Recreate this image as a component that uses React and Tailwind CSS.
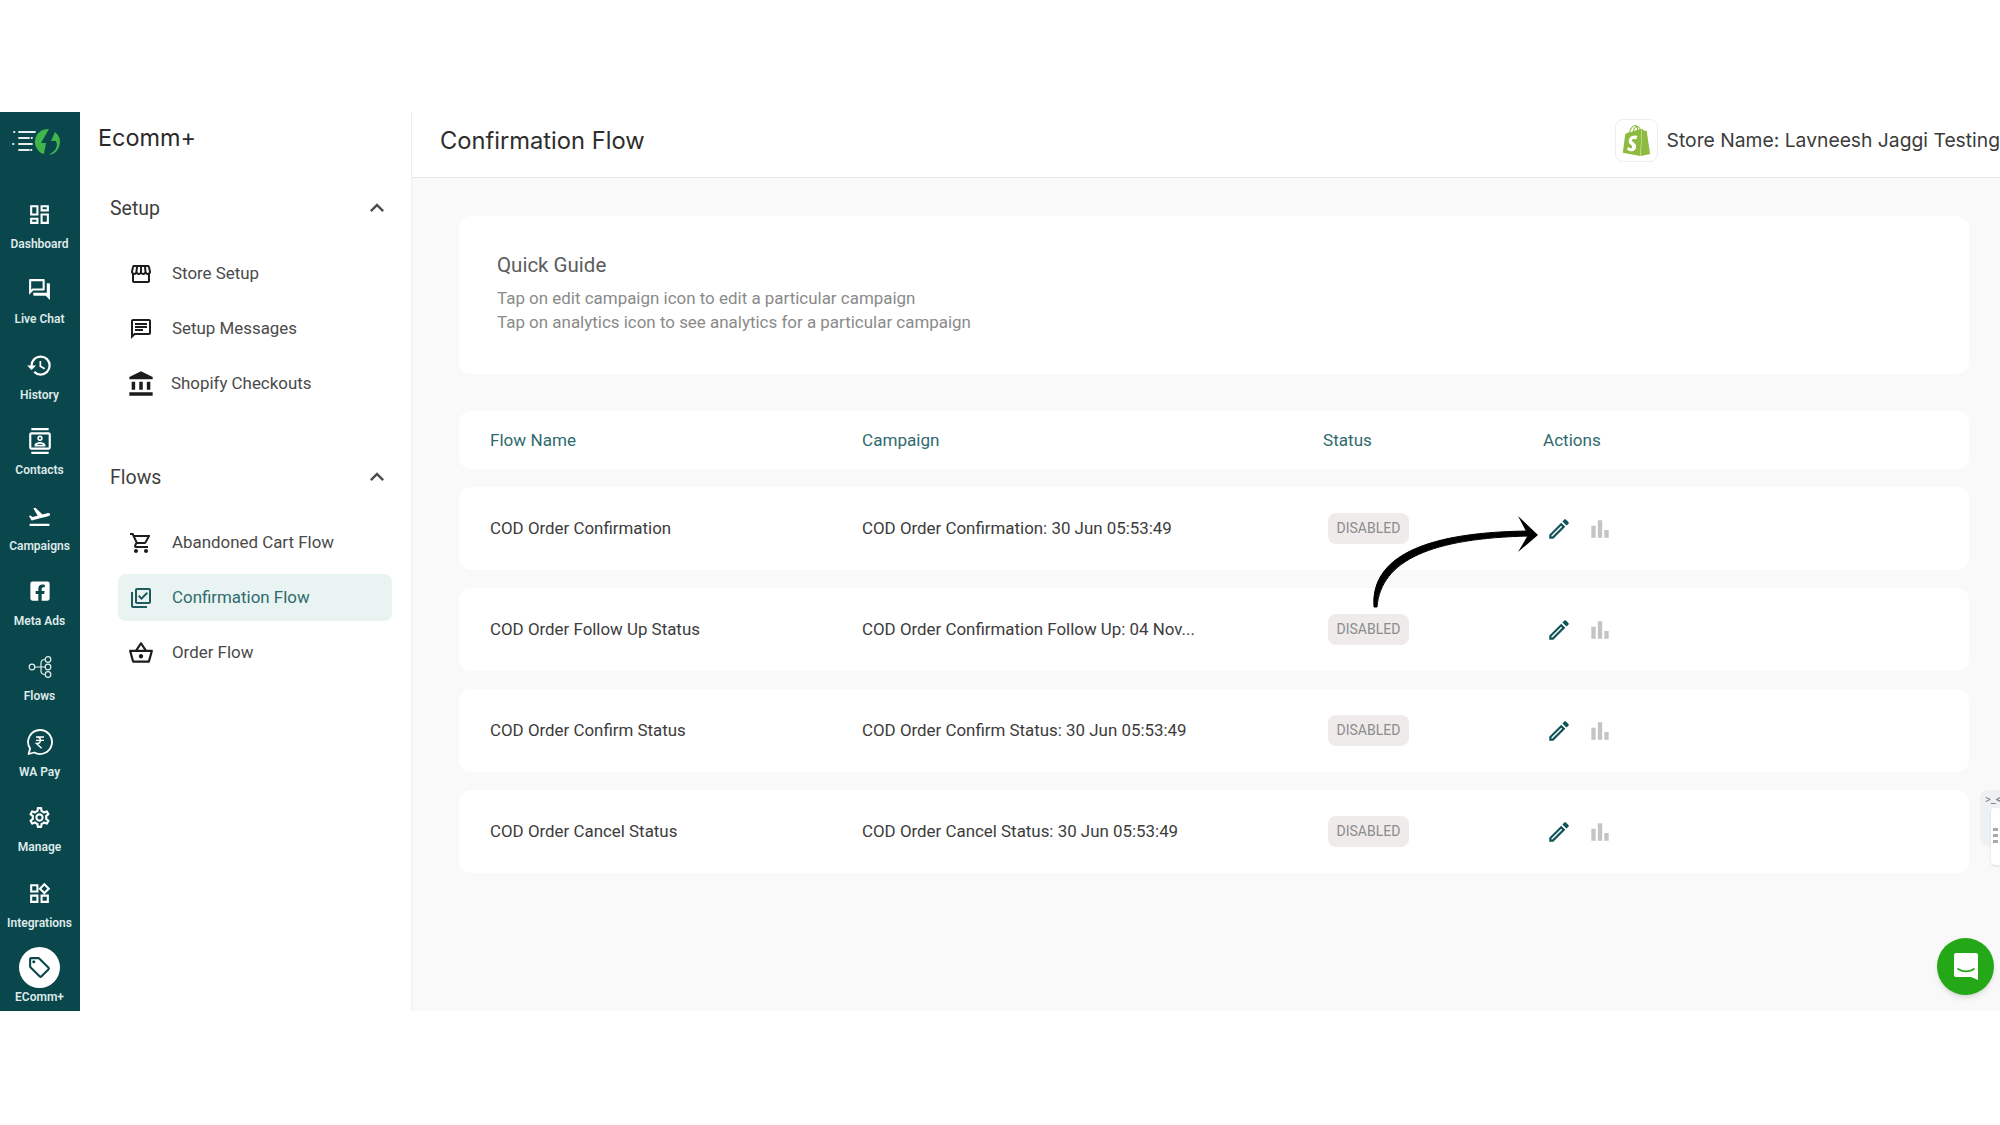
import React from 'react';
import {
  MdOutlineDashboard, MdOutlineQuestionAnswer, MdHistory, MdOutlineContacts, MdFlightTakeoff,
  MdOutlineSettings, MdOutlineWidgets, MdOutlineLocalOffer, MdOutlineStorefront, MdOutlineChat,
  MdAccountBalance, MdOutlineShoppingCart, MdOutlineLibraryAddCheck, MdOutlineShoppingBasket,
  MdKeyboardArrowUp, MdOutlineEdit, MdBarChart,
} from 'react-icons/md';
import { FaFacebookSquare } from 'react-icons/fa';
import { SiShopify } from 'react-icons/si';

function FlowsIcon() {
  return (
    <svg width="26" height="26" viewBox="0 0 26 26" fill="none" stroke="#e4eeee" strokeWidth="1.2">
      <circle cx="5" cy="13" r="2.8" />
      <circle cx="21" cy="5.5" r="2.800" />
      <circle cx="21" cy="13" r="2.800" />
      <circle cx="21" cy="20.5" r="2.800" />
      <path d="M7.800 13h10.400M18.200 5.500c-3.500 0-4.200 2-4.200 3.500v8c0 1.500.7 3.500 4.200 3.500" />
    </svg>
  );
}

function PayIcon() {
  return (
    <svg width="28" height="28" viewBox="0 0 28 28" fill="none" stroke="white" strokeWidth="1.8">
      <path d="M14 2a12 12 0 1 1-5.800 22.500L2.600 26l1.500-5.400A12 12 0 0 1 14 2z" strokeLinejoin="round" />
      <path d="M10 9h8M10 12.400h8M11 9c4.500 0 4.500 6.400 0 6.400h-.6l5.200 4.800" strokeWidth="1.400" />
    </svg>
  );
}

function Logo() {
  return (
    <svg width="52" height="28" viewBox="0 0 52 28" fill="none">
      <g stroke="#e6efef" strokeWidth="1.800" strokeLinecap="round">
        <path d="M3 4h.5M8 4h16M8 10h10M20.500 10h.5M2 16h.5M8 16h13M8 22h10M20 22h.5" />
      </g>
      <path d="M38 1A13 13 0 0 0 30 25L33 26L35 15L30 15Z" fill="#3fb54a" />
      <path d="M44 4A13 13 0 0 1 38 27L43 23A9 9 0 0 0 45 13L40 13Z" fill="#3fb54a" />
    </svg>
  );
}

const railItems = [
  { label: 'Dashboard', icon: <MdOutlineDashboard size={25} /> },
  { label: 'Live Chat', icon: <MdOutlineQuestionAnswer size={25} /> },
  { label: 'History', icon: <MdHistory size={27} /> },
  { label: 'Contacts', icon: <MdOutlineContacts size={26} /> },
  { label: 'Campaigns', icon: <MdFlightTakeoff size={25} /> },
  { label: 'Meta Ads', icon: <FaFacebookSquare size={22} /> },
  { label: 'Flows', icon: <FlowsIcon /> },
  { label: 'WA Pay', icon: <PayIcon /> },
  { label: 'Manage', icon: <MdOutlineSettings size={25} /> },
  { label: 'Integrations', icon: <MdOutlineWidgets size={25} /> },
];

const setupItems = [
  { label: 'Store Setup', icon: <MdOutlineStorefront size={24} /> },
  { label: 'Setup Messages', icon: <MdOutlineChat size={24} /> },
  { label: 'Shopify Checkouts', icon: <MdAccountBalance size={28} />, tight: true },
];

const flowItems = [
  { label: 'Abandoned Cart Flow', icon: <MdOutlineShoppingCart size={24} /> },
  { label: 'Confirmation Flow', icon: <MdOutlineLibraryAddCheck size={24} />, active: true },
  { label: 'Order Flow', icon: <MdOutlineShoppingBasket size={26} /> },
];

const rows = [
  { name: 'COD Order Confirmation', campaign: 'COD Order Confirmation: 30 Jun 05:53:49' },
  { name: 'COD Order Follow Up Status', campaign: 'COD Order Confirmation Follow Up: 04 Nov...' },
  { name: 'COD Order Confirm Status', campaign: 'COD Order Confirm Status: 30 Jun 05:53:49' },
  { name: 'COD Order Cancel Status', campaign: 'COD Order Cancel Status: 30 Jun 05:53:49' },
];

function Rail() {
  return (
    <aside className="w-[80px] shrink-0 bg-[#0a474c] pr-[1px] flex flex-col items-center text-white font-['Roboto',sans-serif]">
      <div className="h-[78px] pt-[16px] pl-[11px] w-full">
        <Logo />
      </div>
      {railItems.map(item => (
        <div key={item.label} className="h-[75.4px] w-full flex flex-col items-center">
          <div className="h-[47px] pt-[2px] flex items-center justify-center">{item.icon}</div>
          <span className="text-[12px] font-semibold leading-[14px] text-[#dfeaea] whitespace-nowrap">{item.label}</span>
        </div>
      ))}
      <div className="w-full flex flex-col items-center pt-[3px]">
        <div className="w-[41px] h-[41px] rounded-full bg-white flex items-center justify-center text-[#0a474c]">
          <MdOutlineLocalOffer size={25} />
        </div>
        <span className="text-[12px] font-semibold leading-[14px] mt-[2px] text-[#dfeaea]">EComm+</span>
      </div>
    </aside>
  );
}

function MenuGroup({ title, items }) {
  return (
    <div>
      <div className="h-[40px] pl-[30px] pr-[20px] flex items-center justify-between">
        <span className="text-[19.500px] pt-[2px] text-[#3f3f3f]">{title}</span>
        <MdKeyboardArrowUp size={28} className="text-[#4d4d4d]" />
      </div>
      <ul className="mt-[22px] ml-[38px] mr-[19px] flex flex-col gap-[8px]">
        {items.map(item => (
          <li
            key={item.label}
            className={`h-[47px] rounded-lg flex items-center ${item.active ? 'bg-[#e9f3f2] text-[#2f6b6e]' : 'text-[#4a4a4a]'}`}
          >
            <span className={`w-[46px] flex justify-center shrink-0 ${item.active ? 'text-[#1e5a5e]' : 'text-[#1c1c1c]'}`}>{item.icon}</span>
            <span className={`text-[16.900px] pl-[8px] ${item.tight ? 'ml-[-1px]' : ''}`}>{item.label}</span>
          </li>
        ))}
      </ul>
    </div>
  );
}

function SubNav() {
  return (
    <nav className="w-[332px] shrink-0 bg-white border-r border-[#efefef] font-['Roboto',sans-serif]">
      <div className="h-[51px] pl-[18px] flex items-center font-['Inter',sans-serif] text-[23.400px] text-[#2a2a2a]">Ecomm+</div>
      <div className="mt-[25px]">
        <MenuGroup title="Setup" items={setupItems} />
      </div>
      <div className="mt-[50px]">
        <MenuGroup title="Flows" items={flowItems} />
      </div>
    </nav>
  );
}

function TableRow({ row }) {
  return (
    <div className="h-[83px] rounded-xl bg-white flex items-center pl-[31px] text-[16.900px] text-[#3c3c3c]">
      <div className="w-[372px] shrink-0">{row.name}</div>
      <div className="w-[466px] shrink-0">{row.campaign}</div>
      <div className="w-[218px] shrink-0">
        <span className="inline-flex items-center justify-center w-[81px] h-[31px] rounded-lg bg-[#eeebea] text-[14px] text-[#8c8c8c]">DISABLED</span>
      </div>
      <div className="flex items-center gap-[15px]">
        <MdOutlineEdit size={26} className="text-[#0f5257]" />
        <MdBarChart size={26} className="text-[#c4c4c4]" />
      </div>
    </div>
  );
}

export default function App() {
  return (
    <div className="h-[1125px] bg-white pt-[112px] overflow-hidden">
      <div className="h-[899px] flex">
        <Rail />
        <SubNav />
        <main className="relative flex-1 min-w-0 bg-[#f9f9f9] flex flex-col">
          <header className="h-[66px] shrink-0 bg-white border-b border-[#e8e8e8] pl-[28px] pb-[8px] flex items-center justify-between">
            <h1 className="font-['Inter',sans-serif] text-[23.700px] text-[#2e2e2e]">Confirmation Flow</h1>
            <div className="flex items-center gap-[9px] font-['Inter',sans-serif] text-[19.300px] text-[#3b3b3b] whitespace-nowrap">
              <span className="w-[43px] h-[43px] rounded-lg border border-[#eeeeee] flex items-center justify-center">
                <SiShopify size={31} className="text-[#8dba3f]" />
              </span>
              Store Name: Lavneesh Jaggi Testing
            </div>
          </header>

          <div className="pl-[47px] pr-[31px] pt-[38px] font-['Roboto',sans-serif]">
            <section className="h-[158px] rounded-xl bg-white pl-[38px] pt-[35px]">
              <h2 className="text-[20.500px] leading-[28px] text-[#5c5c5c]">Quick Guide</h2>
              <p className="mt-[7px] text-[16.950px] leading-[24px] text-[#8a8a8a]">Tap on edit campaign icon to edit a particular campaign</p>
              <p className="text-[16.950px] leading-[24px] text-[#8a8a8a]">Tap on analytics icon to see analytics for a particular campaign</p>
            </section>

            <div className="mt-[37px] h-[58px] rounded-xl bg-white flex items-center pl-[31px] pt-[2px] text-[17.100px] text-[#2f6b6e]">
              <div className="w-[372px] shrink-0">Flow Name</div>
              <div className="w-[461px] shrink-0">Campaign</div>
              <div className="w-[220px] shrink-0">Status</div>
              <div>Actions</div>
            </div>

            <div className="mt-[18px] flex flex-col gap-[18px]">
              {rows.map(row => <TableRow key={row.name} row={row} />)}
            </div>
          </div>

          {/* hand drawn arrow pointing at the first edit icon */}
          <svg className="absolute left-[950px] top-[390px]" width="190" height="120" viewBox="0 0 190 120" fill="none">
            <path d="M12 105C9 62 48 30 168 29L168 34C70 36 19 58 15 105Z" fill="black" stroke="black" strokeWidth="1" strokeLinejoin="round" />
            <path d="M156 14L176 33L156 50L166 33Z" fill="black" />
          </svg>

          {/* peeking widget on the right edge */}
          <div className="absolute right-0 top-[678px] w-[20px] h-[56px] bg-[#eef1f3] rounded-l-lg pl-[5px] pt-[2px] text-[11px] text-[#777777] font-['Roboto',sans-serif]">&gt;_&lt;</div>
          <div className="absolute right-0 top-[696px] w-[9px] h-[57px] bg-white rounded-l-sm shadow-sm flex flex-col gap-[3px] pt-[20px] pl-[2px]">
            <span className="w-[5px] h-[3px] bg-[#aaaaaa]" />
            <span className="w-[5px] h-[3px] bg-[#aaaaaa]" />
            <span className="w-[5px] h-[3px] bg-[#aaaaaa]" />
          </div>

          <div className="absolute right-[6px] bottom-[16px] w-[57px] h-[57px] rounded-full bg-[#25a818] flex items-center justify-center shadow-md">
            <svg width="26" height="29" viewBox="0 0 26 29">
              <path d="M3 1h20a2 2 0 0 1 2 2v25l-7-3H3a2 2 0 0 1-2-2V3a2 2 0 0 1 2-2z" fill="white" />
              <path d="M5 17c5 3 11 3 16 0" fill="none" stroke="#25a818" strokeWidth="1.800" strokeLinecap="round" />
            </svg>
          </div>
        </main>
      </div>
    </div>
  );
}
